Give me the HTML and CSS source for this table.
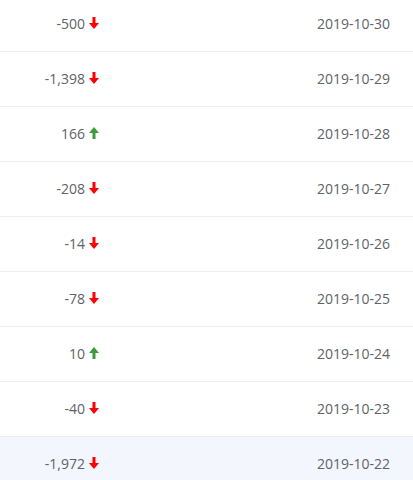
FILE: index.html
```html
<!DOCTYPE html>
<html lang="en">
<head>
    <meta charset="UTF-8">
    <meta name="viewport" content="width=device-width, initial-scale=1.0">
    <title>Daily Change</title>
    <link rel="stylesheet" href="styles.css">
</head>
<body>
    <div class="table">
        <div class="row">
            <div class="cell value">-500 <svg class="arrow down" viewBox="0 0 10 12"><rect x="3.5" y="0" width="3" height="7"/><polygon points="0,6 10,6 5,12"/></svg></div>
            <div class="cell date">2019-10-30</div>
        </div>
        <div class="row">
            <div class="cell value">-1,398 <svg class="arrow down" viewBox="0 0 10 12"><rect x="3.5" y="0" width="3" height="7"/><polygon points="0,6 10,6 5,12"/></svg></div>
            <div class="cell date">2019-10-29</div>
        </div>
        <div class="row">
            <div class="cell value">166 <svg class="arrow up" viewBox="0 0 10 12"><rect x="3.5" y="5" width="3" height="7"/><polygon points="0,6 10,6 5,0"/></svg></div>
            <div class="cell date">2019-10-28</div>
        </div>
        <div class="row">
            <div class="cell value">-208 <svg class="arrow down" viewBox="0 0 10 12"><rect x="3.5" y="0" width="3" height="7"/><polygon points="0,6 10,6 5,12"/></svg></div>
            <div class="cell date">2019-10-27</div>
        </div>
        <div class="row">
            <div class="cell value">-14 <svg class="arrow down" viewBox="0 0 10 12"><rect x="3.5" y="0" width="3" height="7"/><polygon points="0,6 10,6 5,12"/></svg></div>
            <div class="cell date">2019-10-26</div>
        </div>
        <div class="row">
            <div class="cell value">-78 <svg class="arrow down" viewBox="0 0 10 12"><rect x="3.5" y="0" width="3" height="7"/><polygon points="0,6 10,6 5,12"/></svg></div>
            <div class="cell date">2019-10-25</div>
        </div>
        <div class="row">
            <div class="cell value">10 <svg class="arrow up" viewBox="0 0 10 12"><rect x="3.5" y="5" width="3" height="7"/><polygon points="0,6 10,6 5,0"/></svg></div>
            <div class="cell date">2019-10-24</div>
        </div>
        <div class="row">
            <div class="cell value">-40 <svg class="arrow down" viewBox="0 0 10 12"><rect x="3.5" y="0" width="3" height="7"/><polygon points="0,6 10,6 5,12"/></svg></div>
            <div class="cell date">2019-10-23</div>
        </div>
        <div class="row hover">
            <div class="cell value">-1,972 <svg class="arrow down" viewBox="0 0 10 12"><rect x="3.5" y="0" width="3" height="7"/><polygon points="0,6 10,6 5,12"/></svg></div>
            <div class="cell date">2019-10-22</div>
        </div>
    </div>
</body>
</html>
```

FILE: styles.css
```css
body {
    margin: 0;
    font-family: "Open Sans", Arial, sans-serif;
    font-size: 14px;
    color: #606266;
    background-color: #fff;
    overflow: hidden;
}
.table {
    margin-top: -3px;
}
.row {
    display: flex;
    align-items: center;
    height: 52px;
    padding-bottom: 2px;
    border-bottom: 1px solid #ebeef5;
}
.row.hover {
    background-color: #f3f6fd;
}
.cell {
    display: flex;
    align-items: center;
}
.value {
    width: 99px;
    justify-content: flex-end;
}
.date {
    flex: 1;
    justify-content: flex-end;
    padding-right: 23px;
}
.arrow {
    width: 10px;
    height: 12px;
    margin-left: 4px;
}
.arrow.down {
    fill: #ff0000;
}
.arrow.up {
    fill: #3f9a3f;
}
```
